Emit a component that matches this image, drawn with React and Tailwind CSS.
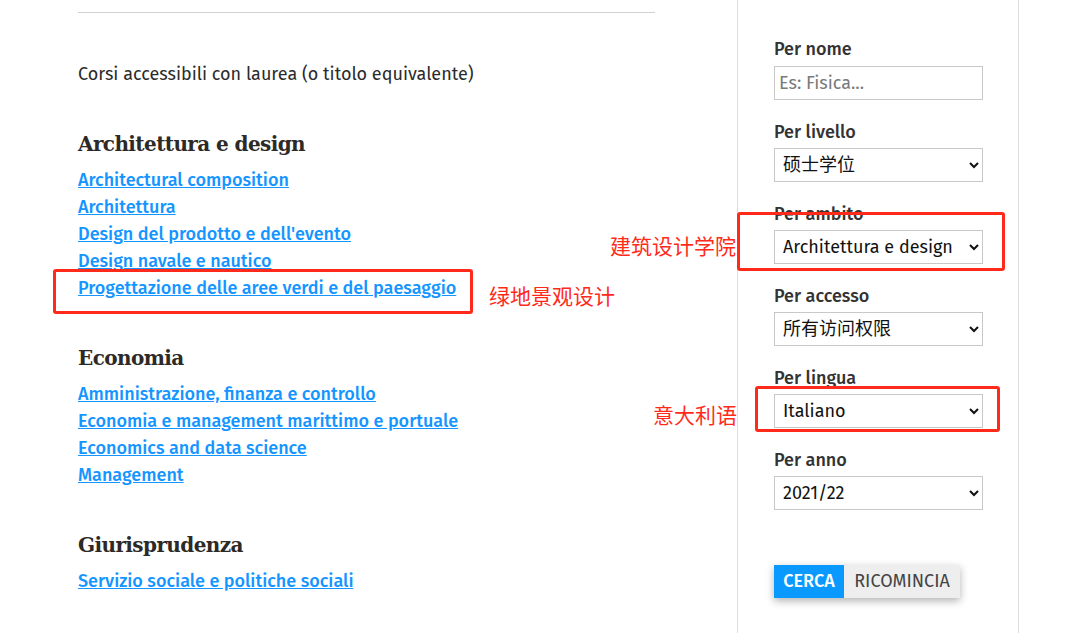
import React from "react";

const sections = [
  {
    title: "Architettura e design",
    links: [
      "Architectural composition",
      "Architettura",
      "Design del prodotto e dell'evento",
      "Design navale e nautico",
      "Progettazione delle aree verdi e del paesaggio",
    ],
  },
  {
    title: "Economia",
    links: [
      "Amministrazione, finanza e controllo",
      "Economia e management marittimo e portuale",
      "Economics and data science",
      "Management",
    ],
  },
  {
    title: "Giurisprudenza",
    links: ["Servizio sociale e politiche sociali"],
  },
];

const filters = [
  { label: "Per livello", value: "硕士学位" },
  { label: "Per ambito", value: "Architettura e design" },
  { label: "Per accesso", value: "所有访问权限" },
  { label: "Per lingua", value: "Italiano" },
  { label: "Per anno", value: "2021/22" },
];

const sans = "font-['Fira_Sans','Lato','Noto_Sans_CJK_SC',sans-serif]";
const note = "text-[21px] leading-[26px] text-[#ff2a1a] font-['Noto_Sans_CJK_SC',sans-serif] whitespace-nowrap";
const box = "border-[3px] border-[#ff2a1a] rounded-[3px] shrink-0";

function App() {
  return (
    <div className={`relative min-h-screen bg-white flex ${sans}`}>
      {/* main list */}
      <div className="w-[655px] pl-[78px] pt-[12px] shrink-0">
        <div className="border-t border-[#d0d0d0] pt-[48px]">
          <p className="text-[18px] leading-[27px] text-[#2b2b2b]">
            Corsi accessibili con laurea (o titolo equivalente)
          </p>
          {sections.map((s) => (
            <div key={s.title} className="mt-[41px]">
              <h2 className="font-['DejaVu_Serif',serif] font-bold text-[20px] leading-[30px] text-[#2d2926] mb-[8px] tracking-[-0.6px]">
                {s.title}
              </h2>
              <ul>
                {s.links.map((l) => (
                  <li key={l} className="text-[18px] leading-[27px]">
                    <a href="#" className="text-[#1495ff] font-medium underline">
                      {l}
                    </a>
                  </li>
                ))}
              </ul>
            </div>
          ))}
        </div>
      </div>

      {/* sidebar */}
      <aside className="ml-[82px] w-[282px] shrink-0 border-x border-[#dcdcdc] pl-[36px] pt-[37px]">
        <label className="block text-[18px] leading-[24px] font-medium text-[#333] mb-[5px]">
          Per nome
        </label>
        <input
          type="text"
          placeholder="Es: Fisica..."
          className="w-[209px] h-[34px] border border-[#c8c8c8] px-[4px] text-[18px] placeholder:text-[#7a7a7a] outline-none"
        />
        {filters.map((f) => (
          <div key={f.label} className="mt-[20px]">
            <label className="block text-[18px] leading-[24px] font-medium text-[#333] mb-[4px]">
              {f.label}
            </label>
            <select
              defaultValue={f.value}
              className="w-[209px] h-[34px] border border-[#c8c8c8] pl-[4px] pr-[6px] text-[18px] text-[#111] bg-white"
            >
              <option>{f.value}</option>
            </select>
          </div>
        ))}
        <div className="mt-[55px] flex w-fit shadow-[0_3px_8px_rgba(0,0,0,0.3)]">
          <button className="h-[33px] w-[70px] bg-[#0a99ff] text-white text-[18px] font-medium">
            CERCA
          </button>
          <button className="h-[33px] w-[116px] bg-[#eeeeee] text-[#444] text-[18px]">
            RICOMINCIA
          </button>
        </div>
      </aside>

      {/* annotations drawn over the page */}
      <div className="absolute left-[53px] top-[269px] flex items-start gap-[16px]">
        <div className={`${box} w-[420px] h-[45px]`} />
        <span className={`${note} mt-[13px]`}>绿地景观设计</span>
      </div>
      <div className="absolute left-[610px] top-[212px] flex items-start gap-[1px]">
        <span className={`${note} mt-[20px]`}>建筑设计学院</span>
        <div className={`${box} w-[268px] h-[59px]`} />
      </div>
      <div className="absolute left-[653px] top-[386px] flex items-start gap-[18px]">
        <span className={`${note} mt-[15px]`}>意大利语</span>
        <div className={`${box} w-[245px] h-[46px]`} />
      </div>
    </div>
  );
}

export default App;
